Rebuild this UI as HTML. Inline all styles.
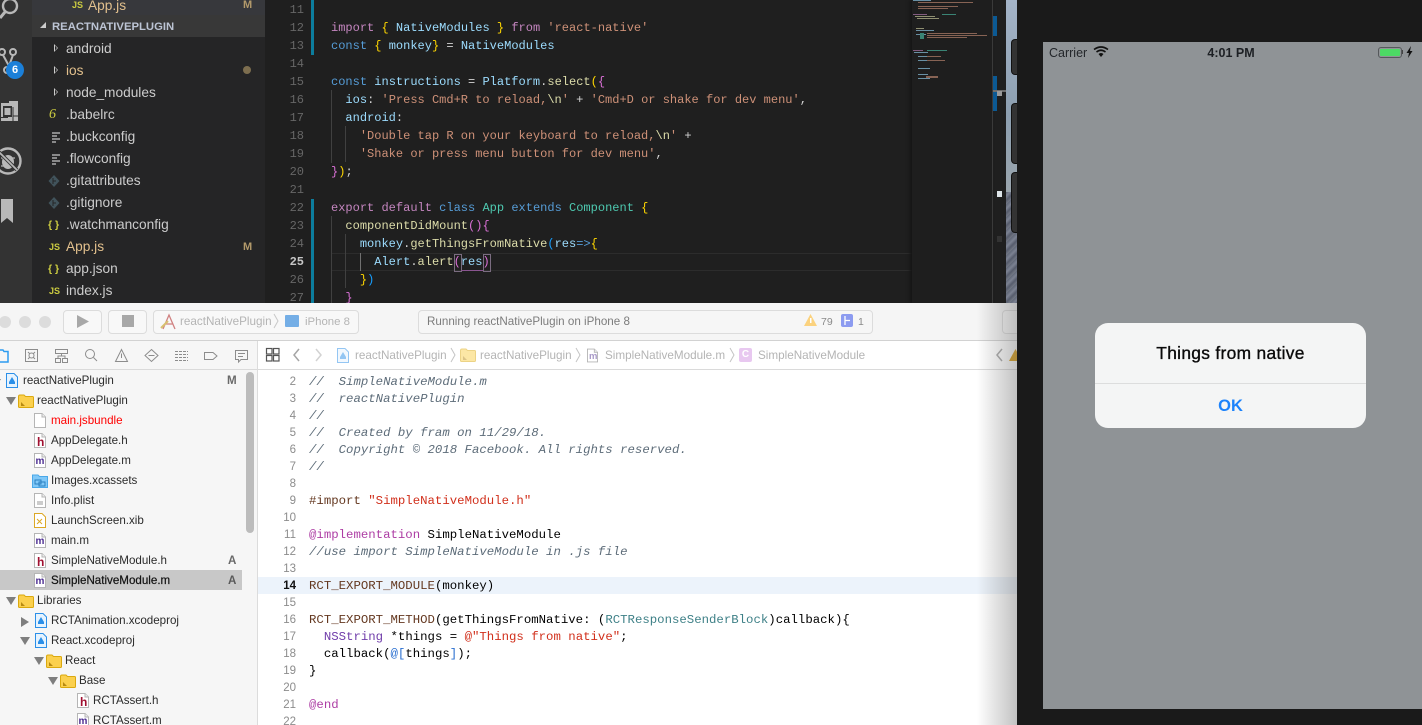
<!DOCTYPE html>
<html><head><meta charset="utf-8">
<style>
html,body{margin:0;padding:0;width:1422px;height:725px;overflow:hidden;background:#1a1a1a}
div,span.a{position:absolute}
.t{position:absolute;white-space:pre;font-family:"Liberation Sans",sans-serif}
svg{position:absolute;overflow:visible}
#vs{left:0;top:0;width:1017px;height:303px;background:#1e1e1e;overflow:hidden}
.row{font-size:13.7px;line-height:22px;height:22px;color:#ccc;left:66px;margin-top:1px}
.ic{font-family:"Liberation Sans",sans-serif;font-size:9px;font-weight:bold;color:#cbcb41;line-height:22px;height:22px;left:49px;white-space:pre;margin-top:1px}
.ln{left:265px;width:39px;text-align:right;height:18px;font:12px/18px "Liberation Mono",monospace;color:#666;margin-top:1px}
.c{left:331px;height:18px;font:12.03px/18px "Liberation Mono",monospace;color:#d4d4d4;white-space:pre;position:absolute;margin-top:1px}
.k{color:#c586c0}.b{color:#569cd6}.v{color:#9cdcfe}.y{color:#4ec9b0}.s{color:#ce9178}.f{color:#dcdcaa}.g{color:#ffd700}.p{color:#da70d6}.u{color:#179fff}
.gd{width:1px;background:#404040}
#xc{left:0;top:303px;width:1017px;height:422px;background:#fff;overflow:hidden}
#tree{left:0;top:1px;width:0;height:0}
.n{font-size:11.6px;line-height:20px;height:20px;color:#2b2b2b}
.xl{left:258px;width:38px;text-align:right;font-size:11.5px;line-height:17px;height:17px;color:#8c8c8c;position:absolute;font-family:"Liberation Sans",sans-serif;margin-top:1px}
.xc{left:309px;height:17px;font:12.35px/17px "Liberation Mono",monospace;color:#000;white-space:pre;position:absolute;margin-top:1px}
.cm{color:#5d6c79;font-style:italic}.mc{color:#643820}.st{color:#d12f1b}.kw{color:#ad3da4}.ty{color:#703daa}.te{color:#3e8087}
.bc{font-size:11.7px;line-height:16px;height:16px;color:#b4b4b4;top:45px}
.tb{font-size:11.7px;line-height:16px;top:11px}
</style></head>
<body>
<svg width="0" height="0" style="position:absolute">
<defs>
<symbol id="fld" viewBox="0 0 16 14"><path d="M.5 2.500Q.5 1 2 1h4l1.500 1.500H14.500Q15.500 2.500 15.500 3.500V12.500Q15.500 13.500 14.500 13.500H1.500Q.5 13.500 .5 12.500Z" fill="#fbd04e" stroke="#dba90f"/><path d="M3 12V8l4 4z" fill="#b88a12"/></symbol>
<symbol id="pg" viewBox="0 0 12 15"><path d="M.5.5H8L11.500 4V14.500H.5Z" fill="#fff" stroke="#b5b5b5"/><path d="M8 .5V4H11.500" fill="#eee" stroke="#b5b5b5"/></symbol>
<symbol id="prj" viewBox="0 0 12 15"><path d="M.5.5H8L11.500 4V14.500H.5Z" fill="#e6f3fe" stroke="#2b8fe8"/><path d="M3 11V9L6 4l3 5v2z" fill="#2b8fe8"/></symbol>
</defs></svg>

<div id="vs">
  <!-- activity bar -->
  <div style="left:0;top:0;width:32px;height:303px;background:#333"></div>
  <svg style="left:0;top:0" width="32" height="303" fill="none" stroke="#b8b8b8">
    <circle cx="10" cy="6" r="7" stroke-width="2.400"/><path d="M5 12L0 18" stroke-width="3"/>
    <circle cx="2" cy="52" r="3" stroke-width="2"/><circle cx="13" cy="52" r="3" stroke-width="2"/><path d="M3 55L9 66M13 55L9 66" stroke-width="2"/><circle cx="7" cy="70" r="3" stroke-width="2"/>
    <path d="M1 103H9V101H18V121H1Z" fill="#b8b8b8" stroke="none"/><rect x="3" y="106" width="9" height="11" fill="#333" stroke="none"/><rect x="4.500" y="108" width="6" height="7" fill="#b8b8b8" stroke="none"/><path d="M1 117.500H8M13 107V121M13 116H18" stroke="#333"/>
    <circle cx="8" cy="161" r="12.500" stroke-width="2.400"/><ellipse cx="8" cy="162" rx="6" ry="7" fill="#b8b8b8" stroke="none"/><path d="M1 158H15M1 166H15" stroke-width="1.200"/><path d="M-1 152L17 170" stroke="#333" stroke-width="3.500"/><path d="M-1 152L17 170" stroke-width="1.800"/>
    <path d="M1 199H13V223L7 218L1 223Z" fill="#b8b8b8" stroke="none"/>
  </svg>
  <div style="left:6px;top:61px;width:18px;height:18px;border-radius:9px;background:#1b80d9"></div>
  <span class="t" style="left:6px;top:61px;width:18px;text-align:center;line-height:18px;font-size:11px;font-weight:bold;color:#fff">6</span>

  <!-- explorer -->
  <div style="left:32px;top:0;width:233px;height:303px;background:#252526"></div>
  <div style="left:32px;top:0;width:233px;height:15px;background:#37383c"></div>
  <div style="left:32px;top:15px;width:233px;height:22px;background:#383838"></div>
  <span class="t" style="left:88px;top:-5px;font-size:13.700px;line-height:22px;color:#e2c08d">App.js</span>
  <span class="t" style="left:72px;top:-6px;font-size:9px;font-weight:bold;line-height:22px;color:#cbcb41">JS</span>
  <span class="t" style="left:243px;top:-6px;font-size:11px;font-weight:bold;line-height:22px;color:#b39a6b">M</span>
  <span class="t" style="left:52px;top:16px;font-size:11.300px;font-weight:bold;line-height:22px;color:#bcc4d4">REACTNATIVEPLUGIN</span>
  <svg style="left:39px;top:21px" width="8" height="8"><path d="M1 7H7V1Z" fill="#ccc"/></svg>

  <svg style="left:53px;top:44px" width="6" height="60" fill="#ccc"><path d="M1 0L5 4L1 8ZM2 1.500V6.500L4 4Z" fill-rule="evenodd"/><path transform="translate(0 22)" d="M1 0L5 4L1 8ZM2 1.500V6.500L4 4Z" fill-rule="evenodd"/><path transform="translate(0 44)" d="M1 0L5 4L1 8ZM2 1.500V6.500L4 4Z" fill-rule="evenodd"/></svg>

  <span class="t row" style="top:37px">android</span>
  <span class="t row" style="top:59px;color:#e2c08d">ios</span>
  <span class="a" style="left:243px;top:66px;width:8px;height:8px;border-radius:4px;background:#7d6e4f"></span>
  <span class="t row" style="top:81px">node_modules</span>
  <span class="t row" style="top:103px">.babelrc</span>
  <span class="t row" style="top:125px">.buckconfig</span>
  <span class="t row" style="top:147px">.flowconfig</span>
  <span class="t row" style="top:169px">.gitattributes</span>
  <span class="t row" style="top:191px">.gitignore</span>
  <span class="t row" style="top:213px">.watchmanconfig</span>
  <span class="t row" style="top:235px;color:#e2c08d">App.js</span>
  <span class="t row" style="top:257px">app.json</span>
  <span class="t row" style="top:279px">index.js</span>

  <span class="t" style="left:49px;top:104px;font:italic 14px/22px 'Liberation Serif',serif;color:#cbcb41">6</span>
  <svg style="left:51px;top:132px" width="10" height="40" stroke="#c5c5c5" stroke-width="1.200"><path d="M1 1H9M1 4H6M1 7H9M1 10H5"/><path transform="translate(0 22)" d="M1 1H9M1 4H6M1 7H9M1 10H5"/></svg>
  <svg style="left:48px;top:175px" width="12" height="34"><path d="M6 0L11.500 6L6 12L.5 6Z" fill="#41535b"/><path d="M5 3V9M5 6H8" stroke="#252526"/><g transform="translate(0 22)"><path d="M6 0L11.500 6L6 12L.5 6Z" fill="#41535b"/><path d="M5 3V9M5 6H8" stroke="#252526"/></g></svg>
  <span class="t ic" style="top:213px;font-size:10.500px;left:48px">{ }</span>
  <span class="t ic" style="top:235px">JS</span>
  <span class="t ic" style="top:257px;font-size:10.500px;left:48px">{ }</span>
  <span class="t ic" style="top:279px">JS</span>
  <span class="t" style="left:243px;top:236px;font-size:11px;font-weight:bold;line-height:22px;color:#b39a6b">M</span>

  <!-- editor -->
  <div style="left:265px;top:0;width:741px;height:303px;background:#1f1f1f"></div>
  <div style="left:311px;top:0;width:3px;height:55px;background:#0c7d9d"></div>
  <div style="left:311px;top:199px;width:3px;height:104px;background:#0c7d9d"></div>
  <div style="left:331px;top:253px;width:581px;height:16px;border-top:1px solid #2c2c2c;border-bottom:1px solid #2c2c2c"></div>
  <div class="gd" style="left:331px;top:90px;width:1px;height:73px"></div>
  <div class="gd" style="left:345px;top:126px;height:36px"></div>
  <div class="gd" style="left:331px;top:216px;height:87px"></div>
  <div class="gd" style="left:345px;top:234px;height:54px"></div>
  <div class="gd" style="left:360px;top:253px;height:18px;background:#707070"></div>

  <span class="t ln" style="top:0">11</span><span class="t ln" style="top:18px">12</span><span class="t ln" style="top:36px">13</span><span class="t ln" style="top:54px">14</span><span class="t ln" style="top:72px">15</span><span class="t ln" style="top:90px">16</span><span class="t ln" style="top:108px">17</span><span class="t ln" style="top:126px">18</span><span class="t ln" style="top:144px">19</span><span class="t ln" style="top:162px">20</span><span class="t ln" style="top:180px">21</span><span class="t ln" style="top:198px">22</span><span class="t ln" style="top:216px">23</span><span class="t ln" style="top:234px">24</span><span class="t ln" style="top:252px;color:#c6c6c6;font-weight:bold">25</span><span class="t ln" style="top:270px">26</span><span class="t ln" style="top:288px">27</span>

  <span class="c" style="top:18px"><span class="k">import</span> <span class="g">{</span> <span class="v">NativeModules</span> <span class="g">}</span> <span class="k">from</span> <span class="s">'react-native'</span></span>
  <span class="c" style="top:36px"><span class="b">const</span> <span class="g">{</span> <span class="v">monkey</span><span class="g">}</span> = <span class="v">NativeModules</span></span>
  <span class="c" style="top:72px"><span class="b">const</span> <span class="v">instructions</span> = <span class="v">Platform</span>.<span class="f">select</span><span class="g">(</span><span class="p">{</span></span>
  <span class="c" style="top:90px">  <span class="v">ios</span>: <span class="s">'Press Cmd+R to reload,</span><span class="f">\n</span><span class="s">'</span> + <span class="s">'Cmd+D or shake for dev menu'</span>,</span>
  <span class="c" style="top:108px">  <span class="v">android</span>:</span>
  <span class="c" style="top:126px">    <span class="s">'Double tap R on your keyboard to reload,</span><span class="f">\n</span><span class="s">'</span> +</span>
  <span class="c" style="top:144px">    <span class="s">'Shake or press menu button for dev menu'</span>,</span>
  <span class="c" style="top:162px"><span class="p">}</span><span class="g">)</span>;</span>
  <span class="c" style="top:198px"><span class="k">export default</span> <span class="b">class</span> <span class="y">App</span> <span class="b">extends</span> <span class="y">Component</span> <span class="g">{</span></span>
  <span class="c" style="top:216px">  <span class="f">componentDidMount</span><span class="p">()</span><span class="p">{</span></span>
  <span class="c" style="top:234px">    <span class="v">monkey</span>.<span class="f">getThingsFromNative</span><span class="u">(</span><span class="v">res</span><span class="b">=&gt;</span><span class="g">{</span></span>
  <span class="c" style="top:252px">      <span class="v">Alert</span>.<span class="f">alert</span><span class="p">(</span><span class="v">res</span><span class="p">)</span></span>
  <span class="c" style="top:270px">    <span class="g">}</span><span class="u">)</span></span>
  <span class="c" style="top:288px">  <span class="p">}</span></span>
  <div style="left:454px;top:254px;width:6px;height:16px;border:1px solid #7a6c80"></div>
  <div style="left:483px;top:254px;width:6px;height:16px;border:1px solid #7a6c80"></div>
  <div style="left:461px;top:270px;width:22px;height:1px;background:#8a5590"></div>

  <!-- minimap -->
  <div style="left:912px;top:0;width:80px;height:303px;background:#1e1e1e;box-shadow:-2px 0 3px #151515"></div>
  <svg style="left:912px;top:0" width="80" height="90" shape-rendering="crispEdges" opacity=".6">
    <g fill="#9cdcfe"><rect x="1" y="0" width="18" height="1"/><rect x="4" y="30" width="18" height="1"/><rect x="4" y="34" width="10" height="1"/><rect x="2" y="52" width="14" height="1"/><rect x="6" y="56" width="14" height="1"/><rect x="6" y="60" width="12" height="1"/><rect x="6" y="68" width="12" height="1"/><rect x="6" y="74" width="10" height="1"/><rect x="6" y="78" width="12" height="1"/></g>
    <g fill="#ce9178"><rect x="6" y="2" width="55" height="1"/><rect x="6" y="6" width="40" height="1"/><rect x="6" y="8" width="30" height="1"/><rect x="15" y="33" width="50" height="1"/><rect x="15" y="35" width="60" height="1"/><rect x="15" y="37" width="40" height="1"/><rect x="15" y="56" width="14" height="1"/><rect x="15" y="60" width="18" height="1"/><rect x="14" y="76" width="12" height="2"/></g>
    <g fill="#4ec9b0"><rect x="8" y="33" width="4" height="6"/><rect x="15" y="50" width="20" height="1"/><rect x="30" y="14" width="14" height="1"/></g>
    <g fill="#c586c0"><rect x="1" y="14" width="14" height="1"/><rect x="1" y="50" width="10" height="1"/></g>
    <g fill="#dcdcaa"><rect x="3" y="16" width="20" height="1"/><rect x="5" y="18" width="22" height="1"/><rect x="4" y="28" width="8" height="1"/></g>
  </svg>
  <div style="left:992px;top:0;width:1px;height:303px;background:#3a3a3a"></div>
  <div style="left:993px;top:16px;width:4px;height:20px;background:#0c5a94"></div>
  <div style="left:993px;top:76px;width:4px;height:35px;background:#0c5a94"></div>
  <div style="left:993px;top:90px;width:13px;height:2px;background:#6f6f6f"></div>
  <div style="left:997px;top:91px;width:5px;height:5px;background:#9a9a9a"></div>
  <div style="left:997px;top:191px;width:5px;height:6px;background:#dde4e8"></div>
  <div style="left:997px;top:236px;width:5px;height:6px;background:#333"></div>
  <!-- wallpaper -->
  <div style="left:1006px;top:0;width:11px;height:192px;background:linear-gradient(#a4b4c8,#8d9fb0 60%,#9aa5ad)"></div>
  <div style="left:1006px;top:192px;width:11px;height:111px;background:repeating-linear-gradient(135deg,#5f6676 0,#7c8292 3px,#565c6c 6px,#747986 9px)"></div>
  <div style="left:1012px;top:40px;width:6px;height:34px;background:#333;border-radius:3px 0 0 3px;box-shadow:0 0 0 1px #111"></div>
  <div style="left:1012px;top:104px;width:6px;height:59px;background:#333;border-radius:3px 0 0 3px;box-shadow:0 0 0 1px #111"></div>
  <div style="left:1012px;top:173px;width:6px;height:59px;background:#333;border-radius:3px 0 0 3px;box-shadow:0 0 0 1px #111"></div>
</div>

<!-- simulator -->
<div style="left:1017px;top:0;width:405px;height:725px;background:#1a1a1a"></div>
<div style="left:1043px;top:42px;width:379px;height:667px;background:#8f9396"></div>
<span class="t" style="left:1049px;top:46px;font-size:12.500px;line-height:14px;color:#23262a">Carrier</span>
<svg style="left:1093px;top:46px" width="16" height="12" viewBox="0 0 16 12"><path d="M8 11L5.500 8Q8 6 10.500 8Z" fill="#111"/><path d="M3.500 6Q8 2.500 12.500 6" fill="none" stroke="#111" stroke-width="1.600"/><path d="M1 3.500Q8 -1.500 15 3.500" fill="none" stroke="#111" stroke-width="1.600"/></svg>
<span class="t" style="left:1168px;top:46px;width:126px;text-align:center;font-size:12.500px;font-weight:bold;line-height:14px;color:#1d2024">4:01 PM</span>
<div style="left:1378px;top:47px;width:22px;height:9px;border:1px solid #55585b;border-radius:3px"></div>
<div style="left:1380px;top:49px;width:20px;height:7px;background:#4cd964;border-radius:1px"></div>
<div style="left:1402px;top:50px;width:1px;height:4px;background:#444"></div>
<svg style="left:1406px;top:46px" width="7" height="12"><path d="M5 0L0.500 7H3L2 12L6.500 5H4Z" fill="#111"/></svg>

<div style="left:1095px;top:323px;width:271px;height:105px;background:#f4f5f5;border-radius:13px"></div>
<div style="left:1095px;top:383px;width:271px;height:1px;background:#dcdddd"></div>
<span class="t" style="left:1095px;top:343px;width:271px;text-align:center;font-size:17.400px;letter-spacing:.3px;line-height:20px;color:#0a0a0a;-webkit-text-stroke:.35px #0a0a0a">Things from native</span>
<span class="t" style="left:1095px;top:396px;width:271px;text-align:center;font-size:16.500px;font-weight:bold;line-height:20px;color:#1d83fb">OK</span>

<!-- xcode -->
<div id="xc">
  <div style="left:0;top:0;width:1017px;height:37px;background:#f5f5f5;border-bottom:1px solid #d2d2d2"></div>
  <div style="left:0;top:38px;width:1017px;height:28px;background:#fff;border-bottom:1px solid #dadada"></div>
  <div style="left:0;top:38px;width:257px;height:384px;background:#f6f6f6"></div>
  <div style="left:0;top:38px;width:257px;height:28px;background:#f6f6f6;border-bottom:1px solid #dadada"></div>
  <div style="left:257px;top:38px;width:1px;height:384px;background:#dcdcdc"></div>
  <!-- traffic -->
  <div style="left:-1px;top:13px;width:12px;height:12px;border-radius:6px;background:#dcdcdc"></div>
  <div style="left:19px;top:13px;width:12px;height:12px;border-radius:6px;background:#dcdcdc"></div>
  <div style="left:39px;top:13px;width:12px;height:12px;border-radius:6px;background:#dcdcdc"></div>
  <div style="left:63px;top:7px;width:37px;height:22px;border:1px solid #dcdcdc;border-radius:4px;background:#f8f8f8"></div>
  <svg style="left:77px;top:12px" width="12" height="13"><path d="M0 0L12 6.500L0 13Z" fill="#a8a8a8"/></svg>
  <div style="left:108px;top:7px;width:37px;height:22px;border:1px solid #dcdcdc;border-radius:4px;background:#f8f8f8"></div>
  <div style="left:122px;top:12px;width:12px;height:12px;background:#a8a8a8"></div>
  <div style="left:153px;top:7px;width:204px;height:22px;border:1px solid #dcdcdc;border-radius:4px;background:#f8f8f8"></div>
  <svg style="left:160px;top:11px" width="17" height="16" fill="none" stroke="#d08080" stroke-width="1.300"><path d="M3 15L9 1L15 15M5 10H13"/><path d="M1 14L8 7" stroke="#d8c070" stroke-width="2"/></svg>
  <span class="t tb" style="left:180px;color:#b4b4b4">reactNativePlugin</span>
  <svg style="left:273px;top:10px" width="6" height="16" fill="none" stroke="#c8c8c8"><path d="M1 1L5 8L1 15"/></svg>
  <div style="left:285px;top:12px;width:14px;height:12px;background:#74aee6;border-radius:1px"></div>
  <span class="t tb" style="left:305px;color:#b4b4b4;font-size:11.400px">iPhone 8</span>
  <div style="left:418px;top:7px;width:453px;height:22px;border:1px solid #dcdcdc;border-radius:4px;background:#f6f6f6"></div>
  <span class="t tb" style="left:427px;color:#7c7c7c;font-size:11.630px">Running reactNativePlugin on iPhone 8</span>
  <svg style="left:804px;top:11px" width="13" height="13"><path d="M6.500 0L13 12H0Z" fill="#fbd27e"/><rect x="6" y="4" width="1.500" height="5" fill="#fff"/></svg>
  <span class="t" style="left:821px;top:11px;font-size:10.500px;line-height:16px;color:#8a8a8a">79</span>
  <div style="left:841px;top:11px;width:12px;height:13px;background:#8c9bf0;border-radius:2px"></div>
  <svg style="left:841px;top:11px" width="12" height="13" stroke="#fff" stroke-width="1.300"><path d="M4 2V11M4 6.500H9"/></svg>
  <span class="t" style="left:858px;top:11px;font-size:10.500px;line-height:16px;color:#8a8a8a">1</span>
  <div style="left:1002px;top:7px;width:30px;height:22px;border:1px solid #dcdcdc;border-radius:4px;background:#f8f8f8"></div>

  <!-- navigator icons -->
  <svg style="left:0;top:38px" width="257" height="28" fill="none" stroke="#8c8c8c">
    <path d="M-3 9H3L4 10.500H8V21H-3Z" stroke="#2d9cf0" stroke-width="1.500"/>
    <rect x="25.500" y="8.500" width="12" height="12"/><path d="M28 11L35 18M35 11L28 18"/><circle cx="31.500" cy="14.500" r="2.500" fill="#f6f6f6"/>
    <rect x="55.500" y="8.500" width="12" height="4"/><rect x="55.500" y="17.500" width="5" height="4"/><rect x="62.500" y="17.500" width="5" height="4"/><path d="M61.500 12.500V15M58 17.500V15H65V17.500"/>
    <circle cx="90" cy="13" r="4.500"/><path d="M93.500 16.500L97 20"/>
    <path d="M121.500 8.500L127.500 20.500H115.500Z"/><path d="M121.500 12.500V17"/>
    <path d="M151.500 8.500L158 14.500L151.500 20.500L145 14.500Z"/><path d="M148.500 14.500H154.500"/>
    <path d="M175 10.500H188M175 13.500H188M175 16.500H188M175 19.500H188" stroke-dasharray="3 1"/>
    <path d="M204.500 11.500H213L217 15L213 18.500H204.500Z"/>
    <path d="M235.500 9.500H247.500V18.500H241L238.500 21V18.500H235.500Z"/><path d="M238 12.500H245M238 15.500H243"/>
  </svg>
  <!-- jump bar -->
  <svg style="left:266px;top:45px" width="14" height="14" fill="none" stroke="#555" stroke-width="1.200"><rect x=".5" y=".5" width="5.500" height="5.500"/><rect x="7.500" y=".5" width="5.500" height="5.500"/><rect x=".5" y="7.500" width="5.500" height="5.500"/><rect x="7.500" y="7.500" width="5.500" height="5.500"/></svg>
  <svg style="left:292px;top:45px" width="32" height="14" fill="none" stroke-width="1.500"><path d="M7 1L2 7L7 13" stroke="#a5a5a5"/><path d="M24 1L29 7L24 13" stroke="#d2d2d2"/></svg>
  <svg style="left:337px;top:45px;opacity:.5" width="12" height="15"><use href="#prj"/></svg>
  <span class="t bc" style="left:355px">reactNativePlugin</span>
  <svg style="left:450px;top:44px" width="6" height="16" fill="none" stroke="#c4c4c4"><path d="M1 1L5 8L1 15"/></svg>
  <svg style="left:460px;top:45px;opacity:.5" width="16" height="14"><use href="#fld"/></svg>
  <span class="t bc" style="left:480px">reactNativePlugin</span>
  <svg style="left:575px;top:44px" width="6" height="16" fill="none" stroke="#c4c4c4"><path d="M1 1L5 8L1 15"/></svg>
  <svg style="left:587px;top:45px" width="11" height="15"><use href="#pg"/></svg>
  <span class="t" style="left:589px;top:48px;font-size:9.500px;font-weight:bold;line-height:12px;color:#a99ac8">m</span>
  <span class="t bc" style="left:605px">SimpleNativeModule.m</span>
  <svg style="left:729px;top:44px" width="6" height="16" fill="none" stroke="#c4c4c4"><path d="M1 1L5 8L1 15"/></svg>
  <div style="left:739px;top:45px;width:13px;height:14px;background:#e8c8f0;border-radius:2px"></div>
  <span class="t" style="left:739px;top:45px;width:13px;text-align:center;font-size:10px;line-height:14px;color:#fff;font-weight:bold">C</span>
  <span class="t bc" style="left:758px">SimpleNativeModule</span>
  <svg style="left:995px;top:45px" width="8" height="14" fill="none" stroke="#a8a8a8" stroke-width="1.500"><path d="M7 1L2 7L7 13"/></svg>
  <svg style="left:1009px;top:46px" width="13" height="12"><path d="M6.500 0L13 12H0Z" fill="#d99a0c"/></svg>

  <!-- tree -->
  <div style="left:0;top:267px;width:242px;height:20px;background:#c8c8c8"></div>
  <div style="left:246px;top:69px;width:8px;height:161px;border-radius:4px;background:#bcbcbc"></div>
  <div id="tree">
  <svg style="left:0;top:66px" width="90" height="356" fill="#7e7e7e">
    <path d="M-4 9L1 9L-1.500 13Z"/>
    <path d="M6 27H16L11 35Z"/>
    <path d="M6 227H16L11 235Z"/>
    <path d="M21 247L29 252L21 257Z"/>
    <path d="M20 267H30L25 275Z"/>
    <path d="M34 287H44L39 295Z"/>
    <path d="M48 307H58L53 315Z"/>
  </svg>

  <svg style="left:6px;top:69px" width="12" height="15"><use href="#prj"/></svg>
  <span class="t n" style="left:23px;top:67px">reactNativePlugin</span>
  <span class="t n" style="left:227px;top:67px;font-weight:bold;color:#6a6a6a">M</span>
  <svg style="left:18px;top:90px" width="16" height="14"><use href="#fld"/></svg>
  <span class="t n" style="left:37px;top:87px">reactNativePlugin</span>

  <svg style="left:34px;top:109px" width="12" height="15"><use href="#pg"/></svg>
  <span class="t n" style="left:51px;top:107px;color:#f00">main.jsbundle</span>

  <svg style="left:34px;top:129px" width="12" height="15"><use href="#pg"/></svg>
  <span class="t" style="left:37px;top:132px;font-size:12px;font-weight:bold;line-height:12px;color:#a01030">h</span>
  <span class="t n" style="left:51px;top:127px">AppDelegate.h</span>

  <svg style="left:34px;top:149px" width="12" height="15"><use href="#pg"/></svg>
  <span class="t" style="left:35.500px;top:152px;font-size:10px;font-weight:bold;line-height:12px;color:#4a2a90">m</span>
  <span class="t n" style="left:51px;top:147px">AppDelegate.m</span>

  <svg style="left:32px;top:170px" width="16" height="14"><path d="M.5 1H6L7.500 2.500H15.500V13.500H.5Z" fill="#80c8f8" stroke="#4aa8e8"/><rect x="3" y="6" width="6" height="4" fill="none" stroke="#2a7fc0"/><rect x="7" y="8" width="6" height="4" fill="none" stroke="#2a7fc0"/></svg>
  <span class="t n" style="left:51px;top:167px">Images.xcassets</span>

  <svg style="left:34px;top:189px" width="12" height="15"><use href="#pg"/></svg>
  <div style="left:37px;top:197px;width:6px;height:4px;background:#ccc"></div>
  <span class="t n" style="left:51px;top:187px">Info.plist</span>

  <svg style="left:34px;top:209px" width="12" height="15"><path d="M.5.5H8L11.500 4V14.500H.5Z" fill="#fff" stroke="#dca826"/><path d="M3 6L8 11M8 6L3 11" stroke="#dca826"/></svg>
  <span class="t n" style="left:51px;top:207px">LaunchScreen.xib</span>

  <svg style="left:34px;top:229px" width="12" height="15"><use href="#pg"/></svg>
  <span class="t" style="left:35.500px;top:232px;font-size:10px;font-weight:bold;line-height:12px;color:#4a2a90">m</span>
  <span class="t n" style="left:51px;top:227px">main.m</span>

  <svg style="left:34px;top:249px" width="12" height="15"><use href="#pg"/></svg>
  <span class="t" style="left:37px;top:252px;font-size:12px;font-weight:bold;line-height:12px;color:#a01030">h</span>
  <span class="t n" style="left:51px;top:247px">SimpleNativeModule.h</span>
  <span class="t n" style="left:228px;top:247px;font-weight:bold;color:#6a6a6a">A</span>

  <svg style="left:34px;top:269px" width="12" height="15"><use href="#pg"/></svg>
  <span class="t" style="left:35.500px;top:272px;font-size:10px;font-weight:bold;line-height:12px;color:#4a2a90">m</span>
  <span class="t n" style="left:51px;top:267px;color:#111;-webkit-text-stroke:.2px #111">SimpleNativeModule.m</span>
  <span class="t n" style="left:228px;top:267px;font-weight:bold;color:#5a5a5a">A</span>

  <svg style="left:18px;top:290px" width="16" height="14"><use href="#fld"/></svg>
  <span class="t n" style="left:37px;top:287px">Libraries</span>
  <svg style="left:35px;top:309px" width="12" height="15"><use href="#prj"/></svg>
  <span class="t n" style="left:51px;top:307px">RCTAnimation.xcodeproj</span>
  <svg style="left:35px;top:329px" width="12" height="15"><use href="#prj"/></svg>
  <span class="t n" style="left:51px;top:327px">React.xcodeproj</span>
  <svg style="left:46px;top:350px" width="16" height="14"><use href="#fld"/></svg>
  <span class="t n" style="left:65px;top:347px">React</span>
  <svg style="left:60px;top:370px" width="16" height="14"><use href="#fld"/></svg>
  <span class="t n" style="left:79px;top:367px">Base</span>
  <svg style="left:77px;top:389px" width="12" height="15"><use href="#pg"/></svg>
  <span class="t" style="left:80px;top:392px;font-size:12px;font-weight:bold;line-height:12px;color:#a01030">h</span>
  <span class="t n" style="left:93px;top:387px">RCTAssert.h</span>
  <svg style="left:77px;top:409px" width="12" height="15"><use href="#pg"/></svg>
  <span class="t" style="left:78.500px;top:412px;font-size:10px;font-weight:bold;line-height:12px;color:#4a2a90">m</span>
  <span class="t n" style="left:93px;top:407px">RCTAssert.m</span>
  </div>

  <!-- code -->
  <div style="left:258px;top:274px;width:759px;height:17px;background:#ecf3fb"></div>
  <span class="xl" style="top:70px">2</span><span class="xl" style="top:87px">3</span><span class="xl" style="top:104px">4</span><span class="xl" style="top:121px">5</span><span class="xl" style="top:138px">6</span><span class="xl" style="top:155px">7</span><span class="xl" style="top:172px">8</span><span class="xl" style="top:189px">9</span><span class="xl" style="top:206px">10</span><span class="xl" style="top:223px">11</span><span class="xl" style="top:240px">12</span><span class="xl" style="top:257px">13</span><span class="xl" style="top:274px;color:#111;font-weight:bold">14</span><span class="xl" style="top:291px">15</span><span class="xl" style="top:308px">16</span><span class="xl" style="top:325px">17</span><span class="xl" style="top:342px">18</span><span class="xl" style="top:359px">19</span><span class="xl" style="top:376px">20</span><span class="xl" style="top:393px">21</span><span class="xl" style="top:410px">22</span>

  <span class="xc cm" style="top:70px">//  SimpleNativeModule.m</span>
  <span class="xc cm" style="top:87px">//  reactNativePlugin</span>
  <span class="xc cm" style="top:104px">//</span>
  <span class="xc cm" style="top:121px">//  Created by fram on 11/29/18.</span>
  <span class="xc cm" style="top:138px">//  Copyright © 2018 Facebook. All rights reserved.</span>
  <span class="xc cm" style="top:155px">//</span>
  <span class="xc mc" style="top:189px">#import <span class="st">"SimpleNativeModule.h"</span></span>
  <span class="xc" style="top:223px"><span class="kw">@implementation</span> SimpleNativeModule</span>
  <span class="xc cm" style="top:240px">//use import SimpleNativeModule in .js file</span>
  <span class="xc" style="top:274px"><span class="mc">RCT_EXPORT_MODULE</span>(monkey)</span>
  <span class="xc" style="top:308px"><span class="mc">RCT_EXPORT_METHOD</span>(getThingsFromNative: (<span class="te">RCTResponseSenderBlock</span>)callback){</span>
  <span class="xc" style="top:325px">  <span class="ty">NSString</span> *things = <span class="st">@"Things from native"</span>;</span>
  <span class="xc" style="top:342px">  callback(<span style="color:#2a6fd0">@[</span>things<span style="color:#2a6fd0">]</span>);</span>
  <span class="xc" style="top:359px">}</span>
  <span class="xc kw" style="top:393px">@end</span>

  <!-- right edge shadow -->
  <div style="left:977px;top:0;width:40px;height:422px;background:linear-gradient(90deg,rgba(120,120,120,0),rgba(120,120,120,.45))"></div>
</div>
</body></html>
